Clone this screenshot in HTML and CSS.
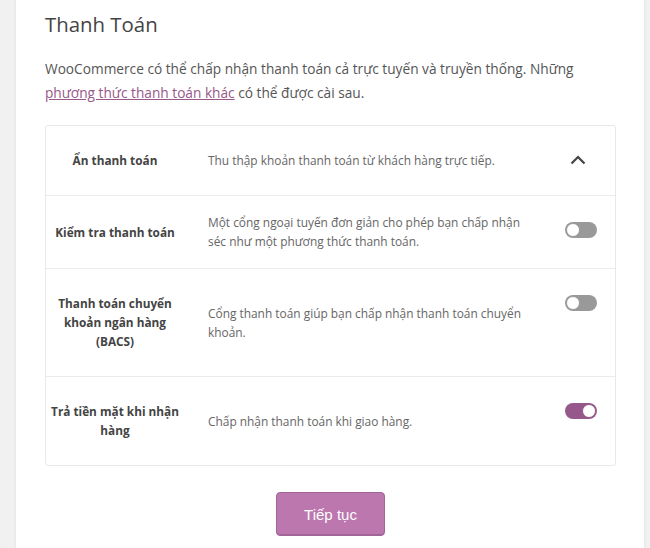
FILE: index.html
```html
<!DOCTYPE html>
<html lang="vi">
<head>
<meta charset="utf-8">
<title>Thanh Toán</title>
<link rel="stylesheet" href="styles.css">
</head>
<body>
<div class="card">
  <h1 class="title">Thanh Toán</h1>
  <p class="intro">WooCommerce có thể chấp nhận thanh toán cả trực tuyến và truyền thống. Những <a href="#" class="link">phương thức thanh toán khác</a> có thể được cài sau.</p>

  <div class="methods">
    <div class="row">
      <div class="name">Ẩn thanh toán</div>
      <div class="desc">Thu thập khoản thanh toán từ khách hàng trực tiếp.</div>
      <div class="ctrl">
        <svg class="chev" width="16" height="10" viewBox="0 0 16 10"><path d="M1.5 8.5 L8 2 L14.5 8.5" fill="none" stroke="#444" stroke-width="2.2"/></svg>
      </div>
    </div>
    <div class="row">
      <div class="name">Kiểm tra thanh toán</div>
      <div class="desc">Một cổng ngoại tuyến đơn giản cho phép bạn chấp nhận séc như một phương thức thanh toán.</div>
      <div class="ctrl"><span class="toggle"></span></div>
    </div>
    <div class="row">
      <div class="name">Thanh toán chuyển khoản ngân hàng (BACS)</div>
      <div class="desc">Cổng thanh toán giúp bạn chấp nhận thanh toán chuyển khoản.</div>
      <div class="ctrl"><span class="toggle"></span></div>
    </div>
    <div class="row">
      <div class="name">Trả tiền mặt khi nhận hàng</div>
      <div class="desc">Chấp nhận thanh toán khi giao hàng.</div>
      <div class="ctrl"><span class="toggle on"></span></div>
    </div>
  </div>

  <div class="actions">
    <button class="btn" type="button">Tiếp tục</button>
  </div>
</div>
</body>
</html>
```

FILE: styles.css
```css
html, body {
  margin: 0;
  padding: 0;
  background: #f1f1f1;
}
body {
  font-family: "Open Sans", "Noto Sans", sans-serif;
  color: #555;
  height: 548px;
  overflow: hidden;
}
.card {
  margin: 0 6px 0 16px;
  background: #fff;
  box-shadow: -1px 0 2px rgba(0,0,0,0.05), 1px 0 2px rgba(0,0,0,0.05);
  padding: 9px 28px 0 29px;
  height: 548px;
  box-sizing: border-box;
}
.title {
  margin: 0;
  font-size: 20.4px;
  font-weight: 400;
  line-height: 30px;
  color: #444;
}
.intro {
  margin: 18px 0 0 0;
  font-size: 13.7px;
  line-height: 24px;
  color: #555;
}
.link {
  color: #96588a;
  text-decoration: underline;
}
.methods {
  margin-top: 20px;
  border: 1px solid #e8e8e8;
  border-radius: 3px;
}
.row {
  display: grid;
  grid-template-columns: 138px 1fr 70px;
  column-gap: 24px;
  border-top: 1px solid #ebebeb;
}
.row:first-child { border-top: 0; }
.name {
  padding: 25px 0;
  font-size: 11.8px;
  font-weight: 700;
  line-height: 19px;
  text-align: center;
  color: #444;
  align-self: center;
}
.desc {
  padding: 17px 0;
  font-size: 11.9px;
  line-height: 19px;
  color: #666;
  align-self: center;
  max-width: 330px;
}
.ctrl {
  padding-top: 26px;
  padding-right: 18px;
  display: flex;
  justify-content: flex-end;
  align-items: flex-start;
}
.chev { margin-right: 11px; margin-top: 3px; }
.toggle {
  position: relative;
  display: block;
  width: 32px;
  height: 16px;
  border-radius: 8px;
  background: #999;
  box-sizing: border-box;
}
.toggle::after {
  content: "";
  position: absolute;
  top: 1px;
  left: 1px;
  width: 14px;
  height: 14px;
  border-radius: 50%;
  background: #fff;
  box-sizing: border-box;
  border: 1px solid #999;
}
.toggle.on { background: #96588a; }
.toggle.on::after { left: 17px; border-color: #96588a; }
.actions {
  display: flex;
  justify-content: center;
  padding-top: 26px;
}
.btn {
  width: 109px;
  height: 44px;
  background: #bb77ae;
  border: 1px solid #a36597;
  border-radius: 4px;
  color: #fff;
  font-family: "Liberation Sans", Arial, sans-serif;
  font-size: 15px;
  box-shadow: inset 0 -1px 0 #a36597;
}
```
